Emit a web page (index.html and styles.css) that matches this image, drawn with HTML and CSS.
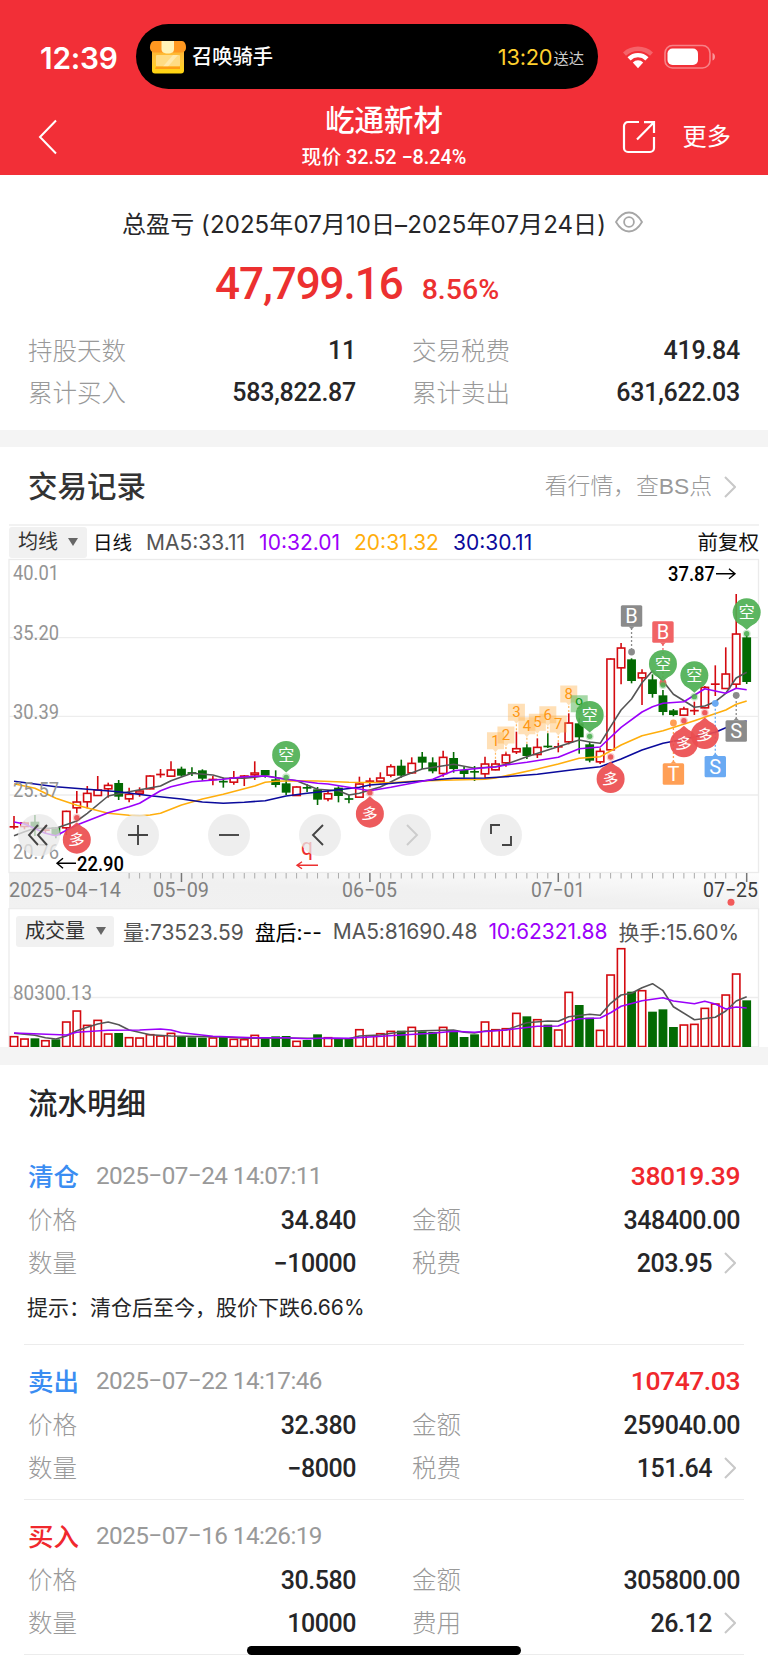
FILE: index.html
```html
<!DOCTYPE html>
<html lang="zh-CN">
<head>
<meta charset="utf-8">
<meta name="viewport" content="width=device-width, initial-scale=1">
<title>屹通新材</title>
<link rel="stylesheet" href="styles.css">
</head>
<body>
<header class="header">
  <div class="status">
    <span class="clock">12:39</span>
    <div class="island">
      <svg class="island-icon" width="38" height="36" viewBox="0 0 38 36">
        <defs><linearGradient id="box" x1="0" y1="0" x2="0" y2="1"><stop offset="0" stop-color="#ffad2b"/><stop offset=".55" stop-color="#ffc63a"/><stop offset="1" stop-color="#ffd60e"/></linearGradient></defs>
        <rect x="3" y="7" width="32" height="27.500" rx="3" fill="url(#box)"/>
        <path d="M5 2h28c2.500 0 4 3 4 6.500 0 3.500-2 5-5 5H6c-3 0-5-1.500-5-5C1 5 2.500 2 5 2z" fill="#ff9820"/>
        <path d="M12.500 2h12.500v8c0 3-2 4.500-6.200 4.500s-6.300-1.500-6.300-4.500z" fill="#fff3b8"/>
        <rect x="7" y="16" width="24" height="11.500" rx="1" fill="#ffdc84"/>
        <path d="M14 27.500l10-11.500h5L19 27.500z" fill="#ffe9ac"/>
        <path d="M7 27.500h24v2.500H6z" fill="#ff9d16"/>
      </svg>
      <span class="island-title">召唤骑手</span>
      <span class="island-time">13:20</span><span class="island-unit">送达</span>
    </div>
    <svg class="wifi" width="32" height="26" viewBox="0 0 32 26">
      <path d="M1 8.500A22 22 0 0 1 31 8.500L28 11.700A17.500 17.500 0 0 0 4 11.700Z" fill="#fff" opacity=".25"/>
      <path d="M5.500 13.200A15 15 0 0 1 26.500 13.200L23.400 16.400A10.500 10.500 0 0 0 8.600 16.400Z" fill="#fff"/>
      <path d="M10.800 18.400A7.500 7.500 0 0 1 21.200 18.400L16 24.300Z" fill="#fff"/>
    </svg>
    <svg class="battery" width="52" height="26" viewBox="0 0 52 26">
      <rect x="1" y="1.500" width="45" height="22.500" rx="7.500" fill="none" stroke="#fff" stroke-opacity=".4" stroke-width="1.600"/>
      <rect x="3.500" y="4.500" width="30.500" height="16.500" rx="5" fill="#fff"/>
      <path d="M48.500 9c3.300 1 3.300 6.500 0 7.500z" fill="#fff" opacity=".5"/>
    </svg>
  </div>
  <div class="nav">
    <svg class="back" width="20" height="36" viewBox="0 0 20 36"><path d="M18 1.500 2 18l16 16.500" fill="none" stroke="#fff" stroke-width="2"/></svg>
    <div class="stock">
      <h1>屹通新材</h1>
      <p>现价 32.52 −8.24%</p>
    </div>
    <svg class="share" width="34" height="34" viewBox="0 0 34 34" fill="none" stroke="#fff" stroke-width="2.200">
      <path d="M17 2H6a4 4 0 0 0-4 4v22a4 4 0 0 0 4 4h22a4 4 0 0 0 4-4V17M22 2.200h10V13M32 2.200 15 19.500"/>
    </svg>
    <span class="more">更多</span>
  </div>
</header>

<section class="summary">
  <div class="range"><span>总盈亏 (2025年07月10日–2025年07月24日)</span>
    <svg width="28" height="22" viewBox="0 0 28 22" fill="none" stroke="#a6a6a6" stroke-width="1.800"><path d="M1 11C4.500 5 8.500 1.500 14 1.500S23.500 5 27 11c-3.500 6-7.500 9.500-13 9.500S4.500 17 1 11z"/><circle cx="14" cy="11" r="4.900"/></svg>
  </div>
  <div class="profit"><span class="profit-value">47,799.16</span><span class="profit-rate">8.56%</span></div>
  <div class="grid">
    <div class="cell"><span>持股天数</span><b>11</b></div>
    <div class="cell"><span>交易税费</span><b>419.84</b></div>
    <div class="cell"><span>累计买入</span><b>583,822.87</b></div>
    <div class="cell"><span>累计卖出</span><b>631,622.03</b></div>
  </div>
</section>

<section class="records">
  <div class="section-head">
    <h2>交易记录</h2>
    <a class="link">看行情，查BS点</a>
    <svg class="chev" width="12" height="22" viewBox="0 0 12 22"><path d="M1 1l10 10L1 21"/></svg>
  </div>
  <div class="legend">
    <span class="select">均线<i class="caret"></i></span>
    <span class="period">日线</span>
    <span class="ma5">MA5:33.11</span>
    <span class="ma10">10:32.01</span>
    <span class="ma20">20:31.32</span>
    <span class="ma30">30:30.11</span>
    <span class="adjust">前复权</span>
  </div>
  <div class="chart">
    <svg id="kline" width="768" height="350" viewBox="0 558 768 350"></svg>
    <div class="tools">
      <span class="tool"><svg viewBox="-21 -21 42 42"><path d="M-1-10-10 0-1 10M8-10-1 0 8 10"/></svg></span>
      <span class="tool"><svg viewBox="-21 -21 42 42"><path d="M-10 0H10M0-10V10"/></svg></span>
      <span class="tool"><svg viewBox="-21 -21 42 42"><path d="M-10 0H10"/></svg></span>
      <span class="tool"><svg viewBox="-21 -21 42 42"><path d="M3-10-7 0 3 10"/></svg></span>
      <span class="tool off"><svg viewBox="-21 -21 42 42"><path d="M-3-10 7 0-3 10"/></svg></span>
      <span class="tool"><svg viewBox="-21 -21 42 42"><path d="M-10-1V-10H-1M10 1V10H1"/></svg></span>
    </div>
  </div>
  <div class="volume">
    <div class="legend vol-legend">
      <span class="select">成交量<i class="caret"></i></span>
      <span class="ma5">量:73523.59</span>
      <span class="after">盘后:--</span>
      <span class="ma5">MA5:81690.48</span>
      <span class="ma10">10:62321.88</span>
      <span class="ma5">换手:15.60%</span>
    </div>
    <svg id="vol" width="768" height="139" viewBox="0 908 768 139"></svg>
  </div>
</section>

<section class="flow">
  <h2>流水明细</h2>
  <article class="entry">
    <div class="entry-head"><span class="kind blue">清仓</span><time>2025−07−24 14:07:11</time><span class="gain">38019.39</span></div>
    <div class="grid">
      <div class="cell"><span>价格</span><b>34.840</b></div>
      <div class="cell"><span>金额</span><b>348400.00</b></div>
      <div class="cell"><span>数量</span><b>−10000</b></div>
      <div class="cell"><span>税费</span><b>203.95</b><svg class="chev" width="12" height="22" viewBox="0 0 12 22"><path d="M1 1l10 10L1 21"/></svg></div>
    </div>
    <p class="tip">提示：清仓后至今，股价下跌6.66%</p>
  </article>
  <article class="entry">
    <div class="entry-head"><span class="kind blue">卖出</span><time>2025−07−22 14:17:46</time><span class="gain">10747.03</span></div>
    <div class="grid">
      <div class="cell"><span>价格</span><b>32.380</b></div>
      <div class="cell"><span>金额</span><b>259040.00</b></div>
      <div class="cell"><span>数量</span><b>−8000</b></div>
      <div class="cell"><span>税费</span><b>151.64</b><svg class="chev" width="12" height="22" viewBox="0 0 12 22"><path d="M1 1l10 10L1 21"/></svg></div>
    </div>
  </article>
  <article class="entry">
    <div class="entry-head"><span class="kind red">买入</span><time>2025−07−16 14:26:19</time></div>
    <div class="grid">
      <div class="cell"><span>价格</span><b>30.580</b></div>
      <div class="cell"><span>金额</span><b>305800.00</b></div>
      <div class="cell"><span>数量</span><b>10000</b></div>
      <div class="cell"><span>费用</span><b>26.12</b><svg class="chev" width="12" height="22" viewBox="0 0 12 22"><path d="M1 1l10 10L1 21"/></svg></div>
    </div>
  </article>
</section>
<div class="home-bar"></div>
<script src="script.js"></script>
</body>
</html>
```

FILE: styles.css
```css
* { box-sizing: border-box; }
body { margin: 0; width: 768px; height: 1669px; overflow: hidden; position: relative; background: #fff; color: #262628; font-family: Roboto, "Noto Sans CJK SC", sans-serif; }
h1, h2, p { margin: 0; }
svg { display: block; flex: none; }
span, time, b, a { white-space: nowrap; }

.header { height: 175px; background: #f22f37; color: #fff; }
.status { height: 89px; padding-top: 24px; display: flex; align-items: center; font-family: Inter, "Noto Sans CJK SC", sans-serif; }
.clock { width: 136px; padding: 2px 0 0 40px; font-size: 29.800px; font-weight: 600; letter-spacing: -.2px; }
.island { width: 462px; height: 65px; border-radius: 33px; background: #000; display: flex; align-items: center; padding: 0 14px 0 13px; }
.island-title { margin-left: 5px; font-size: 20.300px; font-weight: 500; line-height: 30px; }
.island-time { margin-left: auto; color: #ffd02e; font-size: 21.800px; letter-spacing: -.2px; }
.island-unit { margin-left: 1px; font-size: 15.300px; color: #ccc; }
.wifi { margin-left: 24px; }
.battery { margin-left: 10px; }
.nav { height: 86px; display: flex; position: relative; padding: 29px 37px 0 38px; }
.stock { position: absolute; inset: 9px 0 auto; text-align: center; }
.stock h1 { font-size: 29.400px; line-height: 46px; font-weight: 500; }
.stock p { font-size: 19.800px; line-height: 27px; font-weight: 500; }
.share { margin: 2px 27px 0 auto; }
.more { font-size: 24.200px; line-height: 39px; }
.back { margin-top: 1px; }

.summary { height: 272px; padding: 28px 28px 0; border-bottom: 17px solid #f4f4f4; }
.range { display: flex; align-items: center; justify-content: center; gap: 9px; height: 38px; padding-right: 3px; font-family: Inter, "Noto Sans CJK SC", sans-serif; font-size: 24px; letter-spacing: .09px; }
.profit { display: flex; align-items: baseline; height: 86px; padding-left: 187px; gap: 19px; line-height: 86px; color: #ec3030; font-weight: 500; }
.profit-value { font-size: 44px; letter-spacing: -1.050px; }
.profit-rate { font-size: 28.500px; }
.grid { display: grid; grid-template-columns: 328px 328px; column-gap: 56px; grid-auto-rows: 42px; }
.summary .grid { margin-top: 2px; }
.cell { display: flex; align-items: center; font-size: 24.500px; color: #999; }
.cell span { font-weight: 300; margin-top: -2px; }
.cell b { margin: 1px 0 0 auto; color: #262628; font-weight: 500; font-size: 25px; letter-spacing: -.25px; }
.entry .cell b { letter-spacing: -.45px; }
.chev { fill: none; stroke: #c8c8c8; stroke-width: 2; margin-left: 12px; margin-right: 4px; }

.section-head { height: 77px; display: flex; align-items: center; padding: 2px 28px 0; }
h2 { font-size: 29.500px; font-weight: 500; line-height: 44px; color: #333; }
.link { margin: -4px 0 0 auto; color: #999; font-size: 22.800px; font-weight: 300; font-family: "Liberation Sans", "Noto Sans CJK SC", sans-serif; }
.legend { height: 34px; margin: 0 9px; border-top: 2px solid #f2f2f2; display: flex; align-items: center; font-family: Inter, "Noto Sans CJK SC", sans-serif; font-size: 21px; color: #111; }
.select { display: flex; align-items: center; height: 31px; padding: 0 9px; gap: 10px; background: #f1f1f1; border-radius: 3px; color: #333; font-size: 20px; line-height: 29px; }
.caret { border: 5px solid transparent; border-top: 8px solid #666; border-bottom: 0; }
.period { margin: -2px 14px 0 6px; font-size: 19.500px; }
.ma5 { color: #555; }
.ma10 { color: #9b00fa; }
.ma20 { color: #ffae0c; }
.ma30 { color: #0a0a9c; }
.legend > .ma10, .legend > .ma20, .legend > .ma30 { margin-left: 14px; }
.adjust { margin: -2px 0 0 auto; font-size: 20.500px; }
.chart { position: relative; }
.tools { position: absolute; left: 18px; top: 256px; display: flex; gap: 48.700px; }
.tool { width: 42px; height: 42px; border-radius: 50%; background: rgba(232,232,232,.76); }
.tool:first-child { margin-right: 8.500px; }
.tool svg { fill: none; stroke: #444; stroke-width: 1.900; }
.tool.off svg { stroke: #ccc; }
.volume { height: 157px; position: relative; border-bottom: 18px solid #f4f4f4; }
.vol-legend { position: absolute; left: 16px; top: 6px; margin: 0; border: 0; gap: 11px; letter-spacing: -.05px; }
.vol-legend .select { margin-right: -2px; padding-right: 8px; gap: 11px; letter-spacing: 0; }
.legend.vol-legend > .ma10 { margin-left: 0; }
.after { color: #000; }

.flow > h2 { height: 75px; padding: 17px 28px 0; color: #262628; }
.entry { margin: 0 24px; padding: 12px 4px 10px; border-bottom: 1.500px solid #ececec; }
.entry .grid { grid-auto-rows: 43px; }
.entry-head { height: 46px; display: flex; align-items: center; }
.kind { font-size: 25.500px; font-weight: 500; margin-top: -2px; }
.blue { color: #3a8df2; }
.red { color: #f0282d; }
time { margin-left: 17px; color: #999; font-size: 24.300px; letter-spacing: -.57px; }
.gain { margin-left: auto; color: #f0282d; font-size: 26.500px; font-weight: 500; letter-spacing: -.45px; }
.tip { height: 50px; padding-top: 1px; margin-left: -1px; font-family: Inter, "Noto Sans CJK SC", sans-serif; font-size: 21px; line-height: 46px; }
.home-bar { position: absolute; left: 247px; top: 1646px; width: 274px; height: 9px; border-radius: 5px; background: #000; }

.chart text, .volume svg text { font-family: Roboto, "Noto Sans CJK SC", sans-serif; }
```

FILE: script.js
```js
// Candles: [colour, high, open/close top, open/close bottom, low] in third-pixels below the y origin.
const K0 = 550, V0 = 900, STEP = 10.467;
const candles = [
['r',798,829,832,838],['r',815,817,831,838],['g',795,815,832,858],['r',825,839,842,850],['g',832,832,856,865],
['r',782,782,835,855],['r',723,754,775,790],['r',708,728,757,775],['r',678,718,738,738],['r',698,704,718,743],
['g',690,699,740,750],['r',713,731,748,757],['r',712,721,731,740],['r',676,676,718,718],['r',657,672,675,683],
['r',634,658,680,680],['g',650,656,677,680],['g',652,667,671,678],['g',658,661,686,692],['r',678,687,690,706],
['g',683,693,697,713],['r',663,682,698,704],['r',675,676,682,708],['r',634,667,676,690],['g',660,660,676,683],
['g',661,688,705,712],['g',690,700,728,735],['r',709,709,738,738],['g',703,711,716,726],['g',711,718,749,765],
['r',720,729,748,754],['g',709,713,738,757],['g',735,745,749,760],['r',680,700,743,743],['r',683,692,695,712],
['r',667,682,695,700],['r',643,648,677,682],['g',629,647,677,683],['r',622,638,670,672],['g',606,620,638,657],
['g',622,637,664,670],['r',602,620,672,680],['g',606,624,657,668],['g',650,660,672,683],['g',648,664,667,693],
['r',620,640,673,683],['r',630,640,661,661],['r',607,613,640,650],['r',545,594,607,612],['g',583,592,618,627],
['r',565,590,615,624],['g',550,588,591,594],['r',578,589,592,607],['r',490,517,577,583],['g',505,520,562,611],
['g',575,583,632,637],['r',595,602,637,642],['r',325,325,601,601],['r',279,292,355,403],['g',325,328,393,400],
['r',358,367,385,465],['g',373,388,432,443],['g',420,436,486,496],['g',477,481,495,499],['r',470,475,497,497],
['r',455,480,484,495],['r',408,410,475,475],['r',346,400,405,438],['r',292,370,417,417],['r',132,250,404,417],['g',255,262,396,402]];
const volumes = [408,415,415,420,418,364,331,374,359,400,399,411,412,402,406,398,410,412,413,412,411,416,417,404,413,409,408,422,420,403,411,417,417,387,405,399,392,392,380,394,396,380,390,411,403,364,387,384,338,349,357,374,388,275,315,353,389,223,144,275,270,335,328,381,373,371,323,310,283,220,301];
const volGreen = new Set([2,4,10,16,17,18,20,24,25,26,28,29,31,32,37,39,40,42,43,44,49,51,54,55,59,61,62,63,70]);
const lines = [
['#555',[0,857,1,845,2,835,4,835,6,813,7,790,9,738,10,731,11,725,14,708,15,692,17,670,19,675,20,684,22,685,23,682,24,677,26,688,27,692,29,718,31,722,32,735,33,730,34,720,35,711,37,680,39,657,42,643,44,655,46,650,47,643,49,620,51,600,54,570,55,576,56,580,57,530,58,480,59,447,60,398,61,362,62,393,63,433,64,452,65,472,66,468,67,455,68,430,69,384,70,367]],
['#ffae0c',[0,701,2,715,4,745,6,766,9,790,11,796,12,797,13,795,14,790,16,765,18,747,20,733,23,708,24,697,25,694,27,692,29,693,32,697,36,698,38,694,42,690,45,688,46,684,50,657,52,642,54,625,56,620,58,585,60,557,62,542,65,512,68,480,69,463,70,453]],
['#0a0a9c',[0,694,4,710,7,718,10,725,13,737,16,747,18,756,20,760,22,757,24,752,26,738,28,730,30,723,33,712,34,705,38,695,42,685,45,684,47,680,50,673,54,657,56,650,58,627,60,600,62,580,64,568,67,547,68,533,69,520,70,513]],
['#9b00fa',[0,816,1,822,3,850,4,857,6,825,9,788,11,770,12,760,14,722,15,710,17,695,20,688,22,680,24,678,26,688,29,700,30,702,33,717,34,722,36,712,38,700,40,688,42,662,45,653,46,651,47,645,49,637,52,622,54,596,56,591,58,532,60,486,61,470,62,460,64,455,66,416,68,430,69,415,70,419]]];
const volLines = [
['#555',[0,400,2,406,3,413,4,417,5,408,6,392,7,382,8,372,9,366,10,374,11,390,13,404,15,408,20,411,22,415,25,414,28,415,32,416,33,408,35,405,37,395,39,392,42,390,43,397,44,399,45,393,47,390,49,368,51,363,52,364,53,350,55,343,56,346,57,310,58,285,59,280,60,263,61,251,62,272,63,320,65,359,67,352,68,333,69,303,70,290]],
['#9b00fa',[0,399,5,405,6,397,9,391,12,390,14,387,15,390,16,398,19,409,23,413,26,413,28,416,30,414,32,415,34,411,37,405,40,400,42,394,44,397,47,390,50,379,52,378,53,364,54,356,56,354,57,338,58,319,60,302,62,293,63,303,65,311,66,304,67,312,68,327,69,321,70,324]]];

const cx = i => 14 + i * STEP;
const y = v => K0 + v / 3;
const color = { r: '#d40a10', g: '#036a03' };

function polyline(base, [stroke, p]) {
  let pts = '';
  for (let i = 0; i < p.length; i += 2) pts += `${cx(p[i]).toFixed(1)},${(base + p[i + 1] / 3).toFixed(1)} `;
  return `<polyline points="${pts}" fill="none" stroke="${stroke}" stroke-width="1.6" stroke-linejoin="round"/>`;
}
function text(x, base, width, size, fill, s, weight = 400) {
  return `<text x="${x}" y="${base}" font-size="${size}" fill="${fill}" font-weight="${weight}" textLength="${width}" lengthAdjust="spacingAndGlyphs">${s}</text>`;
}
function bar(kind, x, top, bottom) {
  return kind === 'g'
    ? `<rect x="${x - 4.4}" y="${top}" width="8.8" height="${Math.max(bottom - top, 1.6)}" fill="${color.g}"/>`
    : `<rect x="${x - 3.7}" y="${top + .7}" width="7.4" height="${bottom - top - 1.2}" fill="#fff" stroke="${color.r}" stroke-width="1.6"/>`;
}

let k = '<defs><linearGradient id="axis" x1="0" x2="1" y1="1" y2="0"><stop offset="0" stop-color="#f1f1f1"/><stop offset=".5" stop-color="#f0f0f0"/><stop offset="1" stop-color="#fdfdfd"/></linearGradient></defs>';
k += '<rect x="9" y="873" width="750" height="35" fill="url(#axis)"/><rect x="9" y="559.5" width="749.5" height="313" fill="none" stroke="#ebebeb" stroke-width="1.3"/>';
for (const g of [637.7, 716.3, 795]) k += `<path d="M9 ${g}H758" stroke="#ededed" stroke-width="1.3"/>`;
candles.forEach(([c, h, a, b, l], i) => {
  const x = cx(i);
  k += `<path d="M${x} ${y(h)}V${y(l)}" stroke="${color[c]}" stroke-width="1.6"/>`;
  k += b - a < 6
    ? `<path d="M${x - 4.4} ${y((a + b) / 2)}h8.8" stroke="${color[c]}" stroke-width="1.7"/>`
    : bar(c, x, y(a), y(b));
});
lines.forEach(l => k += polyline(K0, l));
[['40.01',579.5],['35.20',640],['30.39',718.5],['25.57',797],['20.76',858.5]].forEach(([s, b]) => k += text(13, b, 46, 20, '#949494', s));

// Day ticks and date labels.
for (let i = 11; i <= 70; i++) {
  const major = [16, 34, 52, 70].includes(i);
  k += `<path d="M${cx(i)} 873v${major ? 9 : 5.5}" stroke="${major ? '#777' : '#aaa'}" stroke-width="${major ? 1.5 : 1}"/>`;
}
k += text(9, 897, 112, 20, '#808080', '2025−04−14') + text(153, 897, 56, 20, '#808080', '05−09') + text(342, 897, 55, 20, '#808080', '06−05')
  + text(531, 897, 54, 20, '#808080', '07−01') + text(703, 897, 55, 20, '#3c3c3c', '07−25');
k += '<circle cx="731" cy="902.300" r="3.500" fill="#f25a5a"/>';
k += text(668, 581, 47, 20, '#000', '37.87', 500) + '<path d="M716 573.700H735M729 568.700l6 5-6 5" fill="none" stroke="#000" stroke-width="1.400"/>';
k += text(77, 870.5, 47, 20, '#000', '22.90', 500) + '<path d="M76 863.300H57M63 858.300l-6 5 6 5" fill="none" stroke="#000" stroke-width="1.400"/>';
k += text(301, 855, 12, 24, '#ec3030', 'q') + '<path d="M318 865.300H297M302 861.800l-5 3.500 5 3.500" fill="none" stroke="#ec3030" stroke-width="1.400"/>';

// Numbered sequence badges.
[[46,572,1],[47,555,2],[48,487,3],[49,527,4],[50,517,5],[51,494,6],[52,522,7],[53,432,8],[54,461,9]].forEach(([i, v, n]) => {
  const x = cx(i), c = y(v), green = n === 9;
  k += `<path d="M${x - 8.5} ${c - 8.5}h17v17h-6l-2.500 3-2.500-3h-6z" fill="${green ? '#5cb85c' : '#ffae42'}" opacity="${green ? .55 : .38}"/>`;
  k += `<path d="M${x} ${c + 12}V${y(candles[i][1])}" stroke="#ffb860" stroke-width="1.200" stroke-dasharray="2 2"/>`;
  k += `<text x="${x}" y="${c + 5}" text-anchor="middle" font-size="15" fill="${green ? '#0f9a1c' : '#ff9712'}">${n}</text>`;
});

// Trade flags with dotted leaders.
[[59,198,306,'B','#8b8b8b'],[62,246,398,'B','#f16365'],[63,672,519,'T','#ff9f55'],[67,650,460,'S','#6aaaf3'],[69,543,436,'S','#8b8b8b']].forEach(([i, v, d, s, f]) => {
  const x = cx(i), c = y(v), dir = d > v ? 1 : -1;
  k += `<path d="M${x} ${c}V${y(d)}" stroke="${f}" stroke-width="1.300" stroke-dasharray="2 2"/><circle cx="${x}" cy="${y(d)}" r="3.400" fill="${f}"/>`;
  k += `<rect x="${x - 10.7}" y="${c - 10.700}" width="21.400" height="21.400" rx="1.500" fill="${f}"/><path d="M${x - 3} ${c + dir * 10.5}h6l-3 ${dir * 3}z" fill="${f}"/>`;
  k += `<text x="${x}" y="${c + 7}" text-anchor="middle" font-size="20" fill="#fff">${s}</text>`;
});

// Long / short signal pins.
[[70,187,251],[62,342,405],[65,376,440],[55,495,559],[26,615,682],[6,869,803],[34,791,728],[57,687,621],[64,580,512],[66,555,488]].forEach(([i, v, d]) => {
  const x = cx(i), c = y(v), down = d > v, f = down ? '#4fb054' : '#ec4e50', s = down ? 1 : -1;
  k += `<g opacity=".92"><circle cx="${x}" cy="${y(d)}" r="4" fill="${f}" opacity=".3"/><circle cx="${x}" cy="${y(d)}" r="2.700" fill="${f}"/>`
    + `<circle cx="${x}" cy="${c}" r="14" fill="${f}"/><path d="M${x - 7} ${c + s * 11.5}L${x} ${c + s * 17.5}L${x + 7} ${c + s * 11.5}z" fill="${f}"/></g>`;
  k += `<text x="${x}" y="${c + 6}" text-anchor="middle" font-size="16" fill="#fff" ${down ? '' : `transform="rotate(8 ${x} ${c})"`}>${down ? '空' : '多'}</text>`;
});
document.getElementById('kline').innerHTML = k;

let v = '<rect x="9" y="908.600" width="749.500" height="138.400" fill="none" stroke="#ebebeb" stroke-width="1.300"/><path d="M9 997.500H758" stroke="#ededed" stroke-width="1.300"/>';
v += text(13, 1000, 79, 20, '#949494', '80300.13');
volumes.forEach((t, i) => v += bar(volGreen.has(i) ? 'g' : 'r', cx(i), V0 + t / 3, 1047));
volLines.forEach(l => v += polyline(V0, l));
document.getElementById('vol').innerHTML = v;
```
